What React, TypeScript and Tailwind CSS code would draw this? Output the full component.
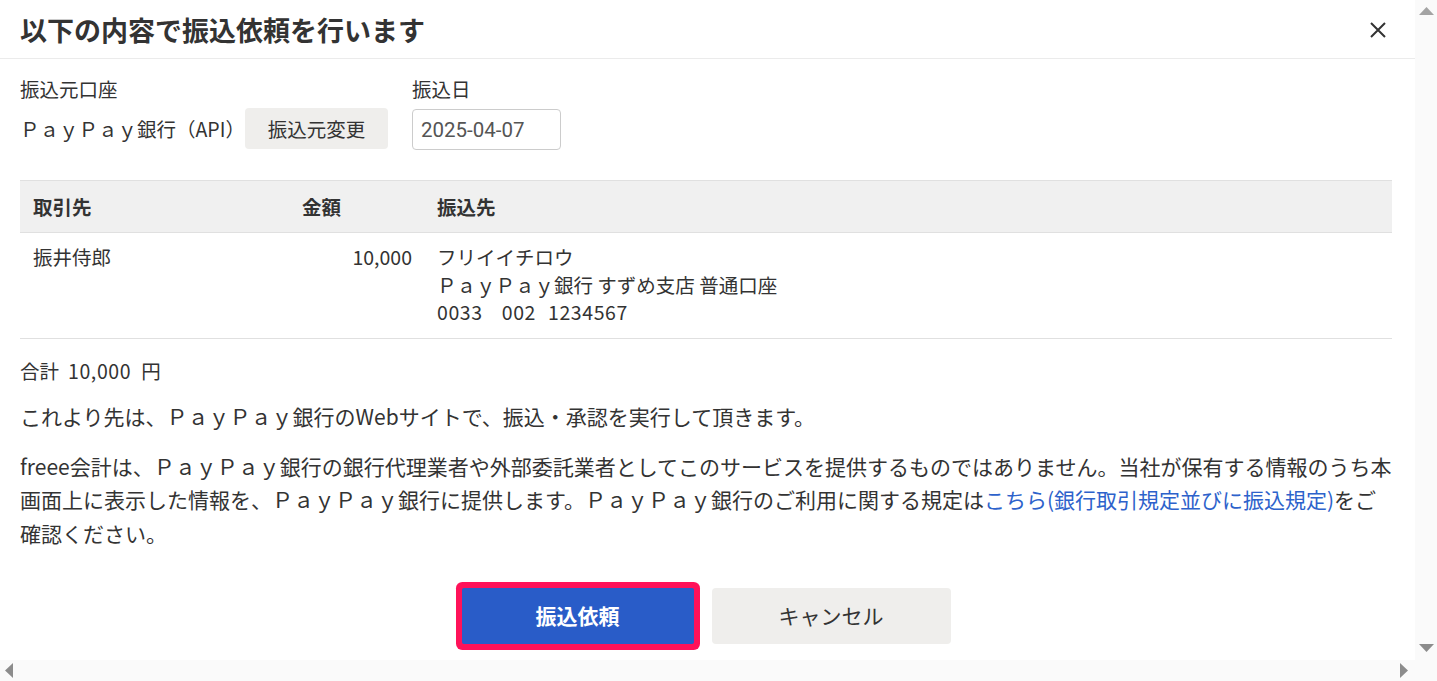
import React from 'react';

const font = { fontFamily: '"Noto Sans CJK JP", "Noto Sans", sans-serif' };

function Triangle({ dir, className }: { dir: 'up' | 'down' | 'left' | 'right'; className: string }) {
  const points = {
    up: '0,8 7.5,0 15,8',
    down: '0,0 15,0 7.5,8',
    left: '8,0 8,15 0,7.5',
    right: '0,0 8,7.5 0,15',
  }[dir];
  const vertical = dir === 'up' || dir === 'down';
  return (
    <svg
      width={vertical ? 15 : 8}
      height={vertical ? 8 : 15}
      viewBox={vertical ? '0 0 15 8' : '0 0 8 15'}
      className={className}
    >
      <polygon points={points} />
    </svg>
  );
}

export default function App() {
  return (
    <div className="w-[1437px] h-[681px] flex overflow-hidden bg-white text-[#333]" style={font}>
      <div className="flex flex-col w-[1415px]">
        <div className="h-[660px] overflow-hidden">
          {/* ヘッダー */}
          <div className="h-[59px] border-b border-[#ebebeb] flex items-center justify-between pl-5 pr-[29px]">
            <h1 className="text-[27px] font-bold leading-none">以下の内容で振込依頼を行います</h1>
            <svg width="16" height="16" viewBox="0 0 16 16" className="mt-[2px]">
              <path d="M1 1 L15 15 M15 1 L1 15" stroke="#333" strokeWidth="2" />
            </svg>
          </div>

          <div className="pl-5 pr-[23px]">
            <div className="flex gap-6 pt-4">
              <div>
                <div className="text-[19.5px] leading-[28px] mb-[5px]">振込元口座</div>
                <div className="flex items-center h-[41px]">
                  <span className="text-[19.5px]">ＰａｙＰａｙ銀行（API）</span>
                  <button className="h-[41px] w-[143px] bg-[#efeeec] rounded-[4px] text-[19.5px] text-[#333]">
                    振込元変更
                  </button>
                </div>
              </div>
              <div>
                <div className="text-[19.5px] leading-[28px] mb-[5px]">振込日</div>
                <input
                  type="text"
                  readOnly
                  value="2025-04-07"
                  className="mt-px h-[41px] w-[149px] border border-[#cccccc] rounded-[4px] pl-2 text-[20.5px] text-[#555] outline-none"
                  style={{ fontFamily: 'Roboto, "Liberation Sans", sans-serif' }}
                />
              </div>
            </div>

            {/* 明細 */}
            <div className="mt-[30px] text-[19.5px]">
              <div className="grid grid-cols-[269px_135px_1fr] h-[53px] items-center bg-[#f0f0f0] border-t border-b border-[#e0e0e0] font-bold">
                <div className="pl-[13px]">取引先</div>
                <div className="pl-[13px]">金額</div>
                <div className="pl-[13px]">振込先</div>
              </div>
              <div className="grid grid-cols-[269px_135px_1fr] border-b border-[#e0e0e0] pt-[10px] pb-[12px] leading-[27.5px]">
                <div className="pl-[13px]">振井侍郎</div>
                <div className="pr-[12px] text-right">10,000</div>
                <div className="pl-[13px]">
                  <div>フリイイチロウ</div>
                  <div>ＰａｙＰａｙ銀行 すずめ支店 普通口座</div>
                  <div className="tracking-[0.6px]">
                    <span className="mr-[19px]">0033</span>
                    <span className="mr-[12px]">002</span>
                    <span>1234567</span>
                  </div>
                </div>
              </div>
            </div>

            <div className="mt-[18px] text-[19.5px] leading-[28px]">
              合計<span className="ml-[9px] mr-[10px] tracking-[0.6px]">10,000</span>円
            </div>
            <p className="mt-[14px] text-[21px] leading-[34px]">
              これより先は、ＰａｙＰａｙ銀行のWebサイトで、振込・承認を実行して頂きます。
            </p>
            <p className="mt-[17px] text-[21px] leading-[33.5px]">
              freee会計は、ＰａｙＰａｙ銀行の銀行代理業者や外部委託業者としてこのサービスを提供するものではありません。当社が保有する情報のうち本
              <br />
              画面上に表示した情報を、ＰａｙＰａｙ銀行に提供します。ＰａｙＰａｙ銀行のご利用に関する規定は
              <a className="text-[#2d62cb]">こちら(銀行取引規定並びに振込規定)</a>
              をご
              <br />
              確認ください。
            </p>

            <div className="mt-[38px] flex justify-center gap-[18px]">
              <button className="w-[232px] h-[56px] bg-[#295cc8] rounded-[2px] ring-[6px] ring-[#ff1259] text-white font-bold text-[21px]">
                振込依頼
              </button>
              <button className="w-[239px] h-[56px] bg-[#efeeec] rounded-[4px] text-[#333] text-[21px]">
                キャンセル
              </button>
            </div>
          </div>
        </div>

        {/* 横スクロールバー */}
        <div className="h-[21px] bg-[#fafafa] flex items-center justify-between pl-[5px] pr-[7px]">
          <Triangle dir="left" className="fill-[#8c8c8c]" />
          <Triangle dir="right" className="fill-[#8c8c8c]" />
        </div>
      </div>

      {/* 縦スクロールバー */}
      <div className="w-[22px] bg-[#fafafa] flex flex-col items-center pt-[7px]">
        <Triangle dir="up" className="fill-[#a3a3a3]" />
        <div className="flex-1" />
        <Triangle dir="down" className="fill-[#8c8c8c] mb-[29px]" />
      </div>
    </div>
  );
}
